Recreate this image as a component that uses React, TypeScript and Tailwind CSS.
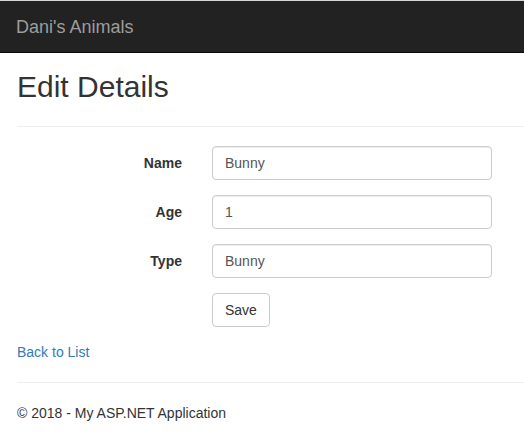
export default function App() {
  const fields = [
    { label: 'Name', value: 'Bunny' },
    { label: 'Age', value: '1' },
    { label: 'Type', value: 'Bunny' },
  ];

  return (
    <div className="min-h-screen bg-white text-[14px] leading-[20px] text-[#333] font-['Liberation_Sans',Arial,sans-serif]">
      {/* Navbar */}
      <div className="border-t border-t-[#d4d4d4] border-b border-b-[#080808] bg-[#222]">
        <div className="flex h-[51px] items-center pl-[16px]">
          <a href="#" className="text-[18px] leading-[20px] text-[#9d9d9d] no-underline">
            Dani's Animals
          </a>
        </div>
      </div>

      <div className="px-[17px]">
        <h2 className="mt-[17px] text-[30px] leading-[33px] font-normal">Edit Details</h2>
        <hr className="mt-[23px] mb-[19px] border-0 border-t border-t-[#eee] -mr-[17px]" />

        <form onSubmit={(e) => e.preventDefault()}>
          {fields.map((f) => (
            <div key={f.label} className="mb-[15px] flex items-start">
              <label className="w-[165px] shrink-0 pt-[7px] text-right font-bold">{f.label}</label>
              <div className="ml-[30px]">
                <input
                  type="text"
                  defaultValue={f.value}
                  className="block h-[34px] w-[280px] rounded-[4px] border border-[#ccc] bg-white px-[12px] py-[6px] text-[14px] leading-[20px] text-[#555] shadow-[inset_0_1px_1px_rgba(0,0,0,0.075)] outline-none"
                />
              </div>
            </div>
          ))}
          <div className="mb-[15px] flex">
            <div className="ml-[195px]">
              <button
                type="submit"
                className="h-[34px] rounded-[4px] border border-[#ccc] bg-white px-[12px] py-[6px] text-[14px] leading-[20px] text-[#333]"
              >
                Save
              </button>
            </div>
          </div>
        </form>

        <div>
          <a href="#" className="text-[#337ab7] no-underline">
            Back to List
          </a>
        </div>

        <hr className="mt-[20px] mb-[20px] border-0 border-t border-t-[#eee] -mr-[17px]" />
        <footer>
          <p>© 2018 - My ASP.NET Application</p>
        </footer>
      </div>
    </div>
  );
}
